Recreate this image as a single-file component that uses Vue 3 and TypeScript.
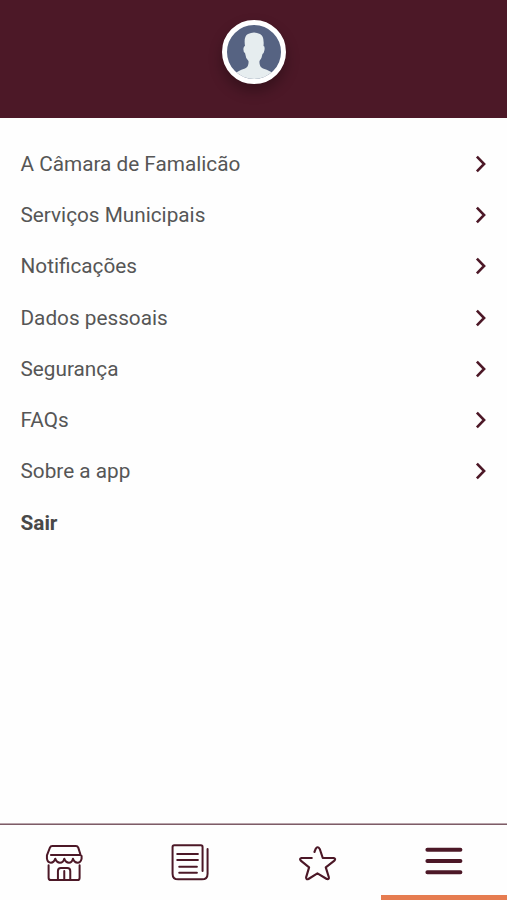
<script setup lang="ts">
import { ref } from 'vue'

interface MenuItem {
  label: string
  exit?: boolean
}

interface Tab {
  name: string
  viewBox: string
  paths: string[]
  weight: number
}

const items: MenuItem[] = [
  { label: 'A Câmara de Famalicão' },
  { label: 'Serviços Municipais' },
  { label: 'Notificações' },
  { label: 'Dados pessoais' },
  { label: 'Segurança' },
  { label: 'FAQs' },
  { label: 'Sobre a app' },
  { label: 'Sair', exit: true },
]

const tabs: Tab[] = [
  {
    name: 'shop',
    viewBox: '25.2 81 120 120',
    weight: 6,
    paths: [
      'M49 120H138L131 98Q129 93 124 93H53Q48 93 46 98L37 121V131Q39 143 49 143Q58 143 62 131Q66 143 76 143Q86 143 89 131Q93 143 103 143Q112 143 115 131Q119 143 129 143Q138 143 141 131V123',
      'M42 151V188Q42 195 49 195H129Q135 195 135 188V151',
      'M70 193V168Q70 159 79 159H98Q107 159 107 168V193M89 168V193',
    ],
  },
  {
    name: 'news',
    viewBox: '30.3 21 120 120',
    weight: 6,
    paths: [
      'M128 108V36Q128 31 123 31H43Q38 31 38 36V116Q38 133 55 133H126Q143 133 143 116V42',
      'M52 57H114M52 75H114M58 95H111M58 113H111',
    ],
  },
  {
    name: 'favourites',
    viewBox: '29.7 21 120 120',
    weight: 6.4,
    paths: [
      'M74 69H43Q36 71 41 77L66 97L57 127Q57 135 64 132L91 115L119 132Q127 134 125 126L116 97L142 77Q147 71 140 69H107L98 42Q91 32 86 41L82 51',
    ],
  },
  {
    name: 'menu',
    viewBox: '160.8 81 120 120',
    weight: 12,
    paths: ['M171 104H270M171 138H270M171 172H270'],
  },
]

const active = ref('menu')
</script>

<template>
  <div class="screen">
    <header class="header">
      <div class="avatar">
        <svg viewBox="0 0 54 54">
          <path
            d="M8 54V49Q10 46 18 43.5Q22 42 21.5 36Q18.5 33 18 28Q16 27 16.5 23Q17 21 18 21Q16.5 11 21 9Q27 6 33 9Q37.5 11 36.5 21Q38 21 37.5 25Q37 28 35.5 29Q35 33 32.5 36Q32 42 36 43.5Q44 46 47 49V54Z"
          />
        </svg>
      </div>
    </header>

    <main class="menu">
      <div v-for="item in items" :key="item.label" class="row" :class="{ exit: item.exit }">
        <span>{{ item.label }}</span>
        <svg v-if="!item.exit" class="chevron" viewBox="0 0 12 18">
          <path d="M1.9 1.6L9.1 9L1.9 16.4" />
        </svg>
      </div>
    </main>

    <nav class="tabs">
      <button
        v-for="tab in tabs"
        :key="tab.name"
        class="tab"
        :class="{ active: tab.name === active }"
        @click="active = tab.name"
      >
        <svg :viewBox="tab.viewBox" :stroke-width="tab.weight">
          <path v-for="d in tab.paths" :key="d" :d="d" />
        </svg>
      </button>
    </nav>
  </div>
</template>

<style>
body {
  margin: 0;
  background: #fefefe;
}
</style>

<style scoped>
.screen {
  display: flex;
  flex-direction: column;
  height: 900px;
  background: #fefefe;
  font-family: Roboto, "Liberation Sans", sans-serif;
  overflow: hidden;
}
.header {
  flex: none;
  display: flex;
  justify-content: center;
  height: 118px;
  padding-top: 20px;
  box-sizing: border-box;
  background: #4c1827;
}
.avatar {
  width: 54px;
  height: 54px;
  border: 5px solid #fff;
  border-radius: 50%;
  background: #566382;
  box-shadow: 0 7px 14px rgba(0, 0, 0, 0.3);
}
.avatar svg {
  display: block;
  width: 54px;
  height: 54px;
  border-radius: 50%;
  fill: #e6edef;
}
.menu {
  flex: 1;
  padding: 20px 20.5px 0 20.5px;
}
.row {
  display: flex;
  align-items: center;
  justify-content: space-between;
  height: 51.3px;
  color: #565656;
  font-size: 20.75px;
  line-height: 26px;
}
.exit {
  color: #484848;
  font-weight: 700;
}
.chevron {
  width: 12px;
  height: 18px;
  fill: none;
  stroke: #4c1827;
  stroke-width: 2.6;
}
.tabs {
  flex: none;
  display: flex;
  height: 77px;
  box-sizing: border-box;
  background: linear-gradient(#b9a5ab 0 1px, #7d5c67 1px 2px, transparent 2px);
}
.tab {
  flex: 1;
  display: flex;
  justify-content: center;
  padding: 19px 0 0;
  border: 0;
  background: none;
}
.tab.active {
  background: linear-gradient(#e67c50, #e67c50) right bottom / 126px 5px no-repeat;
}
.tab svg {
  width: 40px;
  height: 40px;
  fill: none;
  stroke: #4c1827;
  stroke-linecap: round;
  stroke-linejoin: round;
}
</style>
